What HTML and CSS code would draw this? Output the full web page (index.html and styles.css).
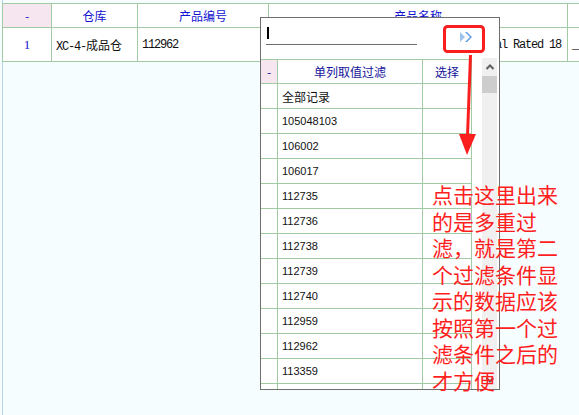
FILE: index.html
```html
<!DOCTYPE html>
<html lang="zh-CN">
<head>
  <meta charset="UTF-8">
  <title>库存查询</title>
  <link rel="stylesheet" href="styles.css">
</head>
<body>

<div class="page">
  <table class="grid main">
    <colgroup>
      <col class="c-mark"><col class="c-store"><col class="c-code"><col class="c-name"><col class="c-more">
    </colgroup>
    <thead>
      <tr><th class="mark">-</th><th>仓库</th><th>产品编号</th><th>产品名称</th><th></th></tr>
    </thead>
    <tbody>
      <tr>
        <td class="idx">1</td>
        <td class="mono">XC-4-<span class="cn">成品仓</span></td>
        <td class="mono">112962</td>
        <td class="mono">Terminal Block 4P Screw Type Industrial Rated 18</td>
        <td class="mono">_</td>
      </tr>
    </tbody>
  </table>
</div>

<!-- column value filter popup -->
<div class="filter-pop">
  <div class="filter-bar">
    <div class="search"><span class="caret"></span></div>
    <button class="go">
      <svg width="12" height="10" viewBox="0 0 12 10">
        <polygon points="0,0 5,5 0,10" fill="#9cc4ef"/>
        <polygon points="5,0 7,0 12,5 7,10 5,10 10,5" fill="#5d9de2"/>
      </svg>
    </button>
  </div>
  <div class="filter-body">
    <div class="list-wrap">
      <table class="grid values">
        <colgroup><col class="v-mark"><col class="v-val"><col class="v-pick"></colgroup>
        <thead>
          <tr><th class="mark">-</th><th>单列取值过滤</th><th>选择</th></tr>
        </thead>
        <tbody>
          <tr><td></td><td class="cn">全部记录</td><td></td></tr>
          <tr><td></td><td>105048103</td><td></td></tr>
          <tr><td></td><td>106002</td><td></td></tr>
          <tr><td></td><td>106017</td><td></td></tr>
          <tr><td></td><td>112735</td><td></td></tr>
          <tr><td></td><td>112736</td><td></td></tr>
          <tr><td></td><td>112738</td><td></td></tr>
          <tr><td></td><td>112739</td><td></td></tr>
          <tr><td></td><td>112740</td><td></td></tr>
          <tr><td></td><td>112959</td><td></td></tr>
          <tr><td></td><td>112962</td><td></td></tr>
          <tr><td></td><td>113359</td><td></td></tr>
          <tr><td></td><td></td><td></td></tr>
        </tbody>
      </table>
    </div>
    <div class="vscroll">
      <div class="arrow">
        <svg width="8" height="6" viewBox="0 0 8 6"><polyline points="0.5,5 4,1.5 7.5,5" fill="none" stroke="#606060" stroke-width="2"/></svg>
      </div>
      <div class="thumb"></div>
      <div class="track"></div>
      <div class="arrow">
        <svg width="8" height="6" viewBox="0 0 8 6"><polyline points="0.5,1 4,4.5 7.5,1" fill="none" stroke="#606060" stroke-width="2"/></svg>
      </div>
    </div>
  </div>
</div>

<!-- red callout -->
<svg class="callout" width="579" height="415" viewBox="0 0 579 415">
  <rect x="444.5" y="26.5" width="39" height="25" rx="3" fill="none" stroke="#fa1e1e" stroke-width="3"/>
  <line x1="470.5" y1="55" x2="467.5" y2="136" stroke="#fa1e1e" stroke-width="3"/>
  <polygon points="459,134 476,134 467,155" fill="#fa1e1e"/>
</svg>
<p class="note">点击这里出来<br>的是多重过<br>滤，就是第二<br>个过滤条件显<br>示的数据应该<br>按照第一个过<br>滤条件之后的<br>才方便</p>

</body>
</html>
```

FILE: styles.css
```css
body {
  margin: 0;
  background: #f5fdff;
  overflow: hidden;
  font-family: "Noto Sans CJK SC", sans-serif;
  font-size: 12px;
}

.page {
  height: 415px;
  margin-left: 2px;
  padding-top: 3px;
  box-sizing: border-box;
  border-left: 1px solid #b8d2ea;
}

/* shared grid look */
.grid {
  border-collapse: collapse;
  table-layout: fixed;
  background: #fff;
}
.grid th, .grid td {
  border: 1px solid #a3cba3;
  padding: 0 0 0 4px;
  white-space: nowrap;
  overflow: hidden;
  text-align: left;
}
.grid th {
  font-weight: normal;
  text-align: center;
  padding: 0;
}
.grid th.mark {
  background: #f6e6f0;
}

/* main list */
.main {
  width: 620px;
  margin-left: -1px;
}
.c-mark { width: 49px; }
.c-store { width: 86px; }
.c-code { width: 131px; }
.c-name { width: 299px; }
.c-more { width: 55px; }

.main th {
  height: 23px;
  color: #1212d0;
}
.main td {
  height: 33px;
}
.main td.idx {
  padding: 0;
  text-align: center;
  color: #1212d0;
  font-family: "Liberation Serif", serif;
  font-size: 13px;
}
.mono {
  font-family: "Liberation Mono", "Noto Sans CJK SC", monospace;
  font-size: 12px;
  letter-spacing: -1.2px;
  color: #111;
}
.mono .cn {
  font-family: "Noto Sans CJK SC", sans-serif;
  letter-spacing: 0;
}

/* filter popup */
.filter-pop {
  position: absolute;
  left: 260px;
  top: 17px;
  width: 238px;
  height: 371px;
  border: 1px solid #6e6e6e;
  background: #fff;
  overflow: hidden;
}
.filter-bar {
  display: flex;
  align-items: flex-start;
  height: 40px;
  padding: 9px 0 0 5px;
  box-sizing: border-box;
}
.search {
  width: 151px;
  height: 17px;
  border-bottom: 1px solid #6e6e6e;
}
.caret {
  display: block;
  width: 2px;
  height: 12px;
  margin-left: 1px;
  background: #000;
}
.go {
  display: flex;
  align-items: center;
  justify-content: center;
  width: 34px;
  height: 20px;
  margin-left: 32px;
  padding: 0;
  border: none;
  background: #fff;
}

.filter-body {
  display: flex;
  height: 331px;
}
.list-wrap {
  width: 221px;
  padding-top: 1px;
  overflow: hidden;
}
.values {
  width: 212px;
  margin-left: -1px;
}
.v-mark { width: 17px; }
.v-val { width: 145px; }
.v-pick { width: 49px; }

.values th {
  height: 23px;
  color: #14149a;
}
.values td {
  height: 24px;
  font-family: "Liberation Sans", sans-serif;
  font-size: 11px;
  color: #111;
}
.values td.cn {
  font-family: "Noto Sans CJK SC", sans-serif;
  font-size: 12px;
}

.vscroll {
  display: flex;
  flex-direction: column;
  width: 15px;
  background: #f0f0f0;
}
.vscroll .arrow {
  display: flex;
  align-items: center;
  justify-content: center;
  height: 18px;
}
.vscroll .thumb {
  height: 17px;
  background: #cdcdcd;
}
.vscroll .track {
  flex: 1;
}

/* annotation */
.callout {
  position: absolute;
  left: 0;
  top: 0;
  pointer-events: none;
}
.note {
  position: absolute;
  left: 432px;
  top: 181px;
  margin: 0;
  font-size: 21px;
  line-height: 26.5px;
  color: #ff1e1e;
}
```
